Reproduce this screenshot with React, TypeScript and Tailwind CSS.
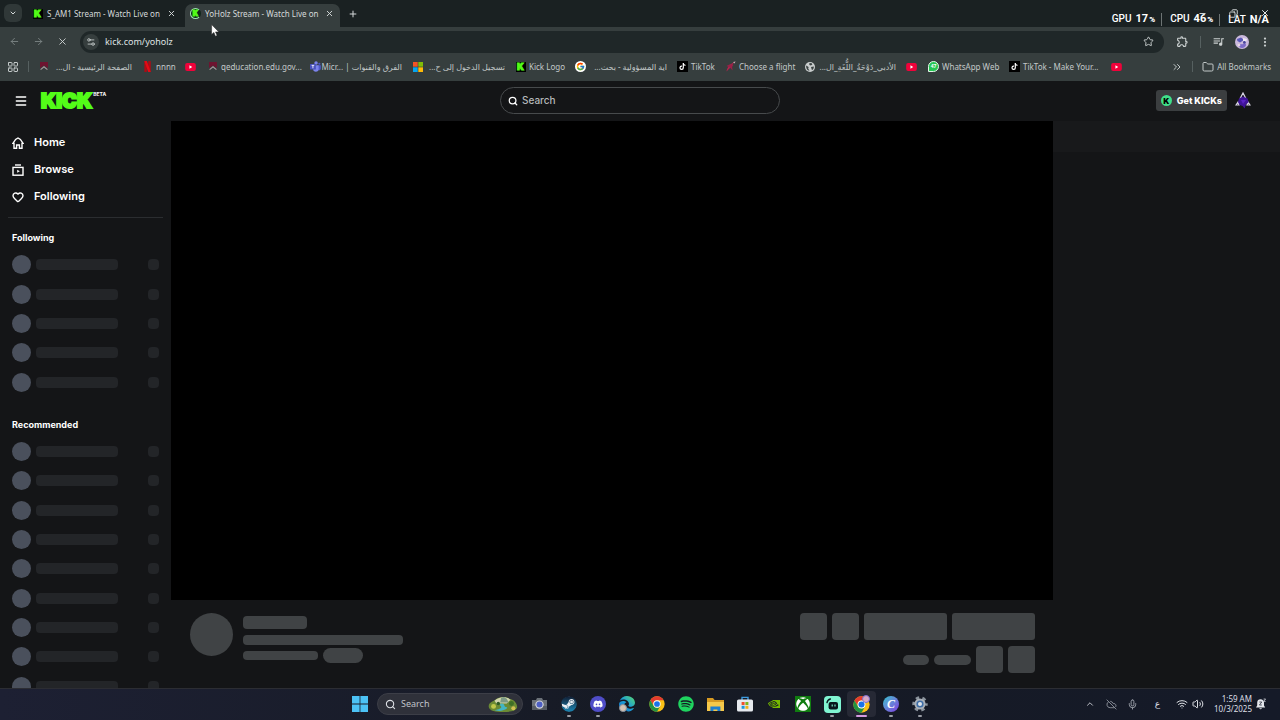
import React from "react";
import {
  ArrowLeft,
  ArrowRight,
  ChevronDown,
  ChevronUp,
  ChevronsRight,
  CloudOff,
  Copy,
  EllipsisVertical,
  Folder,
  Heart,
  LayoutGrid,
  Menu,
  Mic,
  Minus,
  Plus,
  Search,
  Settings2,
  Star,
  Volume2,
  Wifi,
  X,
} from "lucide-react";
import { FaDiscord, FaSpotify, FaSteam, FaXbox, FaTiktok, FaEdge } from "react-icons/fa6";
import { FcGoogle } from "react-icons/fc";
import { MdOutlineExtension, MdOutlineQueueMusic } from "react-icons/md";
import { SiNvidia } from "react-icons/si";

const uiFont = "font-['Noto_Sans','DejaVu_Sans',sans-serif]";

/* ---------- small brand marks ---------- */

const KickIcon = () => (
  <span className="flex size-[10px] items-center justify-center bg-black font-['Inter'] text-[9px] leading-none font-black text-[#53fc18] [-webkit-text-stroke:1px_#53fc18]">
    K
  </span>
);

const KickLiveIcon = () => (
  <span className="flex size-[11px] items-center justify-center rounded-full border border-[#9fe6b4] border-r-transparent bg-[#10251a] font-['Inter'] text-[7px] leading-none font-black text-[#53fc18] [-webkit-text-stroke:1px_#53fc18]">
    K
  </span>
);

const CrestIcon = () => (
  <svg viewBox="0 0 10 10" className="size-[10px]">
    <path d="M1 0h8v6L5 3.6 1 6z" fill="#6d1430" />
    <path d="M1.6 7.6 5 4.8l3.4 2.8" stroke="#a9979d" strokeWidth="1.1" fill="none" />
  </svg>
);

const NetflixIcon = () => (
  <svg viewBox="0 0 10 12" className="h-[11px] w-[9px]">
    <path d="M1.5 0h2.8v12H1.5z" fill="#b00a14" />
    <path d="M5.8 0h2.8v12H5.8z" fill="#b00a14" />
    <path d="M1.5 0h2.8l4.3 12H5.8z" fill="#e50914" />
  </svg>
);

const YoutubeIcon = () => (
  <svg viewBox="0 0 12 9" className="h-[8px] w-[11px]">
    <rect width="12" height="9" rx="2.2" fill="#f0023a" />
    <path d="M4.8 2.6 8 4.5 4.8 6.4z" fill="#fff" />
  </svg>
);

const TeamsIcon = () => (
  <svg viewBox="0 0 12 12" className="size-[11px]">
    <circle cx="6.6" cy="2.2" r="1.9" fill="#7b83eb" />
    <circle cx="10.2" cy="3" r="1.2" fill="#5059c9" />
    <path d="M8 4.6h3.8v3.6a2 2 0 0 1-3.2 1.6z" fill="#5059c9" />
    <path d="M3.4 4.6h6v4a3 3 0 0 1-6 0z" fill="#7b83eb" />
    <rect y="3.2" width="6.4" height="6.2" rx=".6" fill="#4b53bc" />
    <path d="M1.8 4.8h2.8M3.2 4.8v3.2" stroke="#fff" strokeWidth=".9" />
  </svg>
);

const MicrosoftIcon = () => (
  <svg viewBox="0 0 10 10" className="size-[10px]">
    <rect width="4.7" height="4.7" fill="#f35325" />
    <rect x="5.3" width="4.7" height="4.7" fill="#81bc06" />
    <rect y="5.3" width="4.7" height="4.7" fill="#05a6f0" />
    <rect x="5.3" y="5.3" width="4.7" height="4.7" fill="#ffba08" />
  </svg>
);

const GoogleIcon = () => (
  <span className="flex size-[11px] items-center justify-center rounded-full bg-white">
    <FcGoogle size={9} />
  </span>
);

const TiktokIcon = () => (
  <span className="flex size-[11px] items-center justify-center bg-black">
    <FaTiktok size={7} color="#fff" />
  </span>
);

const FlightIcon = () => (
  <svg viewBox="0 0 11 11" className="size-[11px]">
    <path d="M1.5 10.5C2 7 4 3.8 9.6.8 8 3 7 5 5.4 6.4z" fill="#b3234d" />
    <path d="M6 2.8 8.6 5 7 5.6l.6 4L5 6.4 1.4 5z" fill="#9a2048" />
    <path d="m8.2 1 2.4-.6-1.4 2z" fill="#d8bcc4" />
  </svg>
);

const GlobeIcon = () => (
  <svg viewBox="0 0 10 10" className="size-[10px]">
    <circle cx="5" cy="5" r="5" fill="#c9cdcd" />
    <path d="M1.2 3.4 3.6 5l-.4 1.8 1.4 1.6C2.4 8.6.8 6.4 1.2 3.4zM4.2 1.2 6.4 1l1 1.4-1.6 1L4.4 3zM6 5l2.8-.4c.2 1.6-.6 3-1.8 3.6L6.4 6.6z" fill="#3a4242" />
  </svg>
);

const WhatsappIcon = () => (
  <span className="flex size-[11px] items-center justify-center rounded-full rounded-bl-[2px] border border-[#e4f5e9] bg-[#25c653] text-[5px] leading-none font-bold text-white">
    47
  </span>
);

const ChromeIcon = ({ className = "size-[16px]" }: { className?: string }) => (
  <svg viewBox="0 0 48 48" className={className}>
    <circle cx="24" cy="24" r="23" fill="#fbc116" />
    <path d="M4.1 12.5A23 23 0 0 1 43.9 12.5H24A11.5 11.5 0 0 0 14 29.7z" fill="#e33b2e" />
    <path d="M4.1 12.5 14 29.7A11.5 11.5 0 0 0 24 35.5L22 47A23 23 0 0 1 4.1 12.5z" fill="#229342" />
    <path d="M14 29.7A11.5 11.5 0 0 0 34 29.7L24 47A23 23 0 0 1 18 46z" fill="#229342" />
    <circle cx="24" cy="24" r="11" fill="#fff" />
    <circle cx="24" cy="24" r="8.6" fill="#1a73e8" />
  </svg>
);

/* ---------- browser chrome ---------- */

interface ITab {
  title: string;
  active?: boolean;
  icon: React.ReactNode;
}

const tabs: ITab[] = [
  { title: "S_AM1 Stream - Watch Live on", icon: <KickIcon /> },
  { title: "YoHolz Stream - Watch Live on", icon: <KickLiveIcon />, active: true },
];

function TabStrip() {
  return (
    <div className="flex h-[27px] shrink-0 items-end bg-[#1a2122] text-[#d5dada]">
      <button aria-label="Search tabs" className="mb-[5px] ml-1 flex size-[18px] items-center justify-center rounded-[6px] bg-[#303838]">
        <ChevronDown size={8} strokeWidth={3} />
      </button>
      <div className="ml-[5px] flex">
        {tabs.map((tab) => (
          <div
            key={tab.title}
            className={
              "flex h-[23px] w-[155px] items-center rounded-t-[7px] pb-1 pl-[5px] " +
              (tab.active ? "ml-[3px] bg-[#363e3e]" : "")
            }
          >
            <span className="flex w-[11px] shrink-0 justify-center">{tab.icon}</span>
            <span className="mr-auto ml-[4px] text-[8px] leading-3 whitespace-nowrap">{tab.title}</span>
            <button aria-label={"Close " + tab.title} className="mr-[6px] shrink-0">
              <X size={9} strokeWidth={2.5} />
            </button>
          </div>
        ))}
      </div>
      <button aria-label="New tab" className="mb-2 ml-2">
        <Plus size={10} strokeWidth={2.4} />
      </button>
      <div className="mb-[9px] ml-auto flex items-center gap-[22px] pr-[10px] text-[#dfe4e4]">
        <Minus size={9} strokeWidth={2.4} />
        <Copy size={9} strokeWidth={2.4} className="-scale-x-100" />
        <X size={10} strokeWidth={2.4} />
      </div>
    </div>
  );
}

function Toolbar() {
  return (
    <div className="flex h-[29px] shrink-0 items-center rounded-t-[6px] text-[#cdd2d2]">
      <div className="flex pl-[2px]">
        <button aria-label="Back" className="flex w-6 justify-center text-[#7b8383]">
          <ArrowLeft size={11} />
        </button>
        <button aria-label="Forward" className="flex w-6 justify-center text-[#7b8383]">
          <ArrowRight size={11} />
        </button>
        <button aria-label="Stop loading" className="flex w-6 justify-center">
          <X size={11} />
        </button>
      </div>
      <div className="ml-[6px] flex h-[22px] grow items-center rounded-full bg-[#1f2728] pr-[10px] pl-[3px]">
        <button aria-label="View site information" className="flex size-4 items-center justify-center rounded-full bg-[#363e3e]">
          <Settings2 size={10} />
        </button>
        <input
          aria-label="Address"
          defaultValue="kick.com/yoholz"
          className="ml-[6px] h-4 grow bg-transparent text-[9px] text-[#dfe3e3] outline-none"
        />
        <button aria-label="Bookmark this tab">
          <Star size={11} />
        </button>
      </div>
      <button aria-label="Extensions" className="flex h-3 w-[37px] items-center justify-center border-r border-[#566060]">
        <MdOutlineExtension size={13} />
      </button>
      <button aria-label="Media" className="flex w-[34px] justify-center">
        <MdOutlineQueueMusic size={13} />
      </button>
      <button aria-label="Profile">
        <svg viewBox="0 0 14 14" className="size-[14px]">
          <circle cx="7" cy="7" r="7" fill="#cbb9dc" />
          <path d="M2 4 6 2.4 9 5 5 7.4 2.4 6z" fill="#5a58b8" />
          <path d="m8 3 4 1-1 3-3-1z" fill="#efe9f4" />
          <path d="M3 9c2-1 3 1 5 0s3 0 3 1-2 3-4 3-4-2-4-4z" fill="#7d6cc9" />
          <circle cx="4" cy="10" r="1.4" fill="#e7d6e4" />
          <circle cx="9.4" cy="7.4" r="1.4" fill="#49459c" />
        </svg>
      </button>
      <button aria-label="Menu" className="flex w-[31px] justify-center">
        <EllipsisVertical size={12} strokeWidth={2.5} />
      </button>
    </div>
  );
}

interface IBookmark {
  label?: string;
  rtl?: boolean;
  width: string;
  icon: React.ReactNode;
}

const bookmarks: IBookmark[] = [
  { label: "الصفحة الرئيسية - ال...", rtl: true, width: "w-[104px]", icon: <CrestIcon /> },
  { label: "nnnn", width: "w-[43px]", icon: <NetflixIcon /> },
  { width: "w-[22px]", icon: <YoutubeIcon /> },
  { label: "qeducation.edu.gov...", width: "w-[103px]", icon: <CrestIcon /> },
  { label: "الفرق والقنوات | Micr...\u200e", rtl: true, width: "w-[102px]", icon: <TeamsIcon /> },
  { label: "تسجيل الدخول إلى ح...", rtl: true, width: "w-[103px]", icon: <MicrosoftIcon /> },
  { label: "Kick Logo", width: "w-[60px]", icon: <KickIcon /> },
  { label: "اية المسؤولية - بحث...", rtl: true, width: "w-[102px]", icon: <GoogleIcon /> },
  { label: "TikTok", width: "w-[48px]", icon: <TiktokIcon /> },
  { label: "Choose a flight", width: "w-[79px]", icon: <FlightIcon /> },
  { label: "الأدبي_دَوْحَةُ_اللُّغَةِ_ال...", rtl: true, width: "w-[102px]", icon: <GlobeIcon /> },
  { width: "w-[22px]", icon: <YoutubeIcon /> },
  { label: "WhatsApp Web", width: "w-[81px]", icon: <WhatsappIcon /> },
  { label: "TikTok - Make Your...", width: "w-[102px]", icon: <TiktokIcon /> },
  { width: "w-[22px]", icon: <YoutubeIcon /> },
];

function BookmarksBar() {
  return (
    <nav aria-label="Bookmarks" className="flex h-[25px] shrink-0 items-center pb-1 text-[8px] leading-3 whitespace-nowrap text-[#c3c9c9]">
      <button aria-label="Apps" className="ml-[7px]">
        <LayoutGrid size={12} />
      </button>
      <span className="mx-[9px] h-[11px] w-px bg-[#566060]" />
      {bookmarks.map((b, i) => (
        <a key={i} href="#" aria-label={b.label ?? "YouTube"} className={"flex shrink-0 items-center " + b.width}>
          <span className="flex w-[11px] shrink-0 justify-center">{b.icon}</span>
          {b.label && (
            <span dir={b.rtl ? "rtl" : "ltr"} className={b.rtl ? "mr-[10px] grow" : "ml-[3px]"}>
              {b.label}
            </span>
          )}
        </a>
      ))}
      <button aria-label="More bookmarks" className="ml-auto">
        <ChevronsRight size={12} />
      </button>
      <span className="mx-[9px] h-[11px] w-px bg-[#566060]" />
      <button className="mr-[9px] flex items-center gap-[3px]">
        <Folder size={12} />
        All Bookmarks
      </button>
    </nav>
  );
}

const stats = [
  { name: "GPU", value: "17", unit: "%" },
  { name: "CPU", value: "46", unit: "%" },
  { name: "LAT", value: "N/A", unit: "" },
];

// Performance overlay that floats above the window buttons
function StatsOverlay() {
  return (
    <div className="absolute top-[13px] right-[11px] flex items-center font-['Roboto',sans-serif] text-[11px] leading-3 text-white">
      {stats.map((s, i) => (
        <div key={s.name} className={"flex items-baseline " + (i > 0 ? "ml-[6px] border-l border-[#6d7474] pl-[8px]" : "")}>
          <span className="mr-1 text-[10px] font-medium">{s.name}</span>
          <span className="font-bold">{s.value}</span>
          {s.unit && <span className="ml-px text-[8px] font-black">{s.unit}</span>}
        </div>
      ))}
    </div>
  );
}

/* ---------- kick page ---------- */

function KickHeader() {
  return (
    <header className="grid h-10 shrink-0 grid-cols-[1fr_280px_1fr] items-center bg-[#141517] pb-px text-white">
      <div className="flex items-center">
        <button aria-label="Toggle sidebar" className="ml-[14px]">
          <Menu size={14} strokeWidth={2.5} />
        </button>
        <a href="#" aria-label="Kick" className="ml-[13px] flex items-start">
          <span className="text-[20px] leading-5 font-black text-[#53fc18] [-webkit-text-stroke:2px_#53fc18]">KICK</span>
          <span className="ml-px text-[5px] leading-[6px] font-bold">BETA</span>
        </a>
      </div>
      <label className="flex h-[27px] items-center rounded-full border border-[#474a4c] pl-[7px]">
        <Search size={10} strokeWidth={3} />
        <input
          type="text"
          aria-label="Search"
          placeholder="Search"
          className="ml-1 grow bg-transparent text-[10px] font-medium outline-none placeholder:text-[#b4b8ba]"
        />
      </label>
      <div className="flex items-center justify-end pr-[29px]">
        <button className="flex h-[21px] items-center rounded-[3px] bg-[#3b3e40] px-[5px] text-[9px] font-extrabold">
          <span className="mr-[5px] flex size-[11px] items-center justify-center rounded-full bg-[#3fe08a] text-[8px] leading-none font-black text-black">K</span>
          Get KICKs
        </button>
        <button aria-label="Account" className="ml-2">
          <svg viewBox="0 0 16 17" className="h-[17px] w-4">
            <path d="M8 1 5.4 6h5.2zM3 10l-2 3h3zM13 10l2 3h-3z" fill="none" stroke="#d9d4e6" strokeWidth="1.2" />
            <path d="M4 6.4 8 4.6l4.6 2 1 3.6-2.6 2.2-1.4 4-2-2.4-3-1-1.6-3z" fill="#3f1399" />
            <path d="M6 8h5l-3 4z" fill="#5a22c4" />
          </svg>
        </button>
      </div>
    </header>
  );
}

const HomeIcon = () => (
  <svg viewBox="0 0 12 12" className="size-3" fill="none" stroke="currentColor" strokeWidth="1.4">
    <path d="M2 11.2V6.4H.9L3.6 2.4 6 1l2.4 1.4 2.7 4H10v4.8H7.4V8H4.6v3.2z" />
  </svg>
);

const BrowseIcon = () => (
  <svg viewBox="0 0 12 12" className="size-3" fill="none" stroke="currentColor" strokeWidth="1.4">
    <path d="M3 1h6" />
    <rect x="1" y="3.4" width="10" height="7.8" />
    <path d="M5.2 5.8v3L7.8 7.3z" fill="currentColor" stroke="none" />
  </svg>
);

const links = [
  { label: "Home", icon: <HomeIcon /> },
  { label: "Browse", icon: <BrowseIcon /> },
  { label: "Following", icon: <Heart size={12} strokeWidth={2.8} /> },
];

function SkeletonChannel() {
  return (
    <li className="flex items-center">
      <span className="size-[19px] rounded-full bg-[#4a505c]" />
      <span className="ml-[5px] h-[11px] w-[82px] rounded-[4px] bg-[#232528]" />
      <span className="ml-auto size-[11px] rounded-[4px] bg-[#232528]" />
    </li>
  );
}

function Sidebar() {
  return (
    <aside className="w-[171px] shrink-0 overflow-hidden bg-[#141517] pt-2 text-white">
      <nav>
        {links.map((l) => (
          <a key={l.label} href="#" className="flex h-[27px] items-center gap-[10px] pl-3 text-[11px] font-semibold">
            {l.icon}
            {l.label}
          </a>
        ))}
      </nav>
      <hr className="mx-2 mt-[7px] border-[#2b2d30]" />
      <div className="px-3">
        <h2 className="mt-3 text-[9px] leading-4 font-bold">Following</h2>
        <ul className="mt-1 grid h-[147px] grid-rows-5">
          {Array.from({ length: 5 }, (_, i) => (
            <SkeletonChannel key={i} />
          ))}
        </ul>
        <h2 className="mt-5 text-[9px] leading-4 font-bold">Recommended</h2>
        <ul className="mt-1 grid h-[264px] grid-rows-9">
          {Array.from({ length: 9 }, (_, i) => (
            <SkeletonChannel key={i} />
          ))}
        </ul>
      </div>
    </aside>
  );
}

function StreamInfo() {
  return (
    <section aria-label="Stream details" className="flex h-[88px] shrink-0 justify-between pt-[13px] pr-[18px] pl-[19px]">
      <div className="flex">
        <span className="size-[43px] rounded-full bg-[#404345]" />
        <div className="ml-[10px] flex flex-col pt-[3px]">
          <span className="h-[13px] w-16 rounded-[4px] bg-[#404345]" />
          <span className="mt-[6px] h-[10px] w-40 rounded-[4px] bg-[#404345]" />
          <div className="mt-[3px] flex items-center gap-[5px]">
            <span className="h-[9px] w-[75px] rounded-[4px] bg-[#404345]" />
            <span className="h-[15px] w-10 rounded-full bg-[#404345]" />
          </div>
        </div>
      </div>
      <div className="flex flex-col items-end gap-[6px]">
        <div className="flex gap-[5px]">
          <span className="size-[27px] rounded-[4px] bg-[#404345]" />
          <span className="size-[27px] rounded-[4px] bg-[#404345]" />
          <span className="h-[27px] w-[83px] rounded-[3px] bg-[#404345]" />
          <span className="h-[27px] w-[83px] rounded-[3px] bg-[#404345]" />
        </div>
        <div className="flex items-center gap-[5px]">
          <span className="h-[10px] w-[26px] rounded-full bg-[#404345]" />
          <span className="h-[10px] w-[37px] rounded-full bg-[#404345]" />
          <span className="size-[27px] rounded-[4px] bg-[#404345]" />
          <span className="size-[27px] rounded-[4px] bg-[#404345]" />
        </div>
      </div>
    </section>
  );
}

/* ---------- taskbar ---------- */

const CameraIcon = () => (
  <svg viewBox="0 0 17 14" className="h-[14px] w-[17px]">
    <path d="M1 3h4l1-2h5l1 2h4v10H1z" fill="#6b7178" />
    <path d="M1 9h15v4H1z" fill="#565c63" />
    <circle cx="8.5" cy="7.6" r="4.2" fill="#d2d6dc" />
    <circle cx="8.5" cy="7.6" r="3" fill="#4d5fc4" />
  </svg>
);

// white disc underneath shows through the cut-out lever
const SteamIcon = () => (
  <svg viewBox="0 0 16 16" className="size-4">
    <defs>
      <linearGradient id="steam" x1="0" y1="0" x2="0" y2="1">
        <stop offset="0" stopColor="#111d33" />
        <stop offset="1" stopColor="#1b86b4" />
      </linearGradient>
    </defs>
    <circle cx="8" cy="8" r="7.2" fill="#e8edf2" />
    <FaSteam size={16} fill="url(#steam)" />
  </svg>
);

const DiscordIcon = () => (
  <span className="flex size-4 items-center justify-center rounded-full bg-[#4f4dc8] text-white">
    <FaDiscord size={10} />
  </span>
);

const EdgeIcon = () => (
  <span className="relative">
    <svg viewBox="0 0 16 16" className="size-4">
      <defs>
        <linearGradient id="edge" x1="0" y1="1" x2="1" y2="0">
          <stop offset="0" stopColor="#1266c0" />
          <stop offset=".5" stopColor="#1c9fd6" />
          <stop offset="1" stopColor="#5ddc6a" />
        </linearGradient>
      </defs>
      <FaEdge size={16} fill="url(#edge)" />
    </svg>
    <span className="absolute bottom-0 left-0 size-[8px] rounded-full border border-[#8b8f96] bg-[#d5c3b5]" />
  </span>
);

const ExplorerIcon = () => (
  <svg viewBox="0 0 17 15" className="h-[15px] w-[17px]">
    <path d="M0 1h6l1.6 2H17v11H0z" fill="#d79a22" />
    <path d="M0 5h17v9H0z" fill="#f6c84a" />
    <path d="M3.4 14V9.6h10V14h-3v-1.6h-4V14z" fill="#1f7fd0" />
  </svg>
);

const StoreIcon = () => (
  <svg viewBox="0 0 16 16" className="size-4">
    <path d="M5 4V1.4h6V4" fill="none" stroke="#3c9be0" strokeWidth="1.4" />
    <rect y="3.4" width="16" height="12.2" rx="1.6" fill="#e6eaef" />
    <path d="M4.6 6h3v3h-3z" fill="#f0502c" />
    <path d="M8.4 6h3v3h-3z" fill="#7cb51d" />
    <path d="M4.6 9.8h3v3h-3z" fill="#1c97dc" />
    <path d="M8.4 9.8h3v3h-3z" fill="#f0b31c" />
  </svg>
);

const XboxIcon = () => (
  <span className="flex size-4 items-center justify-center bg-[#107c10] text-white">
    <FaXbox size={14} />
  </span>
);

const StreamlabsIcon = () => (
  <svg viewBox="0 0 17 17" className="size-[17px]">
    <rect width="17" height="17" rx="4" fill="#80f5d2" />
    <path d="M3 6.6A4.6 4.6 0 0 1 6.4 3" fill="none" stroke="#09161d" strokeWidth="1.4" strokeLinecap="round" />
    <rect x="4.6" y="6" width="9.4" height="7.4" rx="2" fill="#09161d" />
    <path d="M8.2 8.6v2M11 8.6v2" stroke="#80f5d2" strokeWidth="1.1" />
  </svg>
);

const ChromeProfileIcon = () => (
  <span className="relative">
    <ChromeIcon className="size-[17px]" />
    <span className="absolute -top-px right-0 size-[8px] rounded-full border border-[#7c6fd0] bg-[#d8a9c6]" />
  </span>
);

const CanvaIcon = () => (
  <span className="flex size-4 items-center justify-center rounded-full bg-gradient-to-br from-[#12c2cc] to-[#7a2be0] font-['Liberation_Serif',serif] text-[12px] leading-none font-bold text-white italic">
    C
  </span>
);

const GearIcon = () => (
  <svg viewBox="0 0 16 16" className="size-4">
    <circle cx="8" cy="8" r="6.2" fill="none" stroke="#8b939c" strokeWidth="3" strokeDasharray="3.3 3.19" strokeDashoffset="1.6" />
    <circle cx="8" cy="8" r="4.6" fill="#3e6ea8" stroke="#a9b0b8" strokeWidth="2" />
    <circle cx="8" cy="8" r="2" fill="#dfe4ea" />
  </svg>
);

const apps = [
  { name: "Camera", icon: <CameraIcon /> },
  { name: "Steam", icon: <SteamIcon />, running: true },
  { name: "Discord", icon: <DiscordIcon />, running: true },
  { name: "Edge", icon: <EdgeIcon /> },
  { name: "Chrome", icon: <ChromeIcon /> },
  { name: "Spotify", icon: <FaSpotify size={16} color="#1fd35f" /> },
  { name: "File Explorer", icon: <ExplorerIcon /> },
  { name: "Microsoft Store", icon: <StoreIcon /> },
  { name: "Nvidia", icon: <SiNvidia size={12} color="#76b900" /> },
  { name: "Xbox", icon: <XboxIcon /> },
  { name: "Streamlabs", icon: <StreamlabsIcon />, running: true },
  { name: "Chrome profile", icon: <ChromeProfileIcon />, active: true },
  { name: "Canva", icon: <CanvaIcon />, running: true },
  { name: "Settings", icon: <GearIcon />, running: true },
];

function Taskbar() {
  return (
    <footer className="grid h-8 shrink-0 grid-cols-[1fr_auto_1fr] items-center border-t border-[#2c2d33] bg-gradient-to-r from-[#1d2033] via-[#161a24] to-[#151a28] pb-px text-[#dcdfe4]">
      <span />
      <div className="flex items-center gap-[2px]">
        <button aria-label="Start" className="flex w-[30px] justify-center">
          <svg viewBox="0 0 16 16" className="size-4">
            <path d="M0 0h7.6v7.6H0zM8.4 0H16v7.6H8.4zM0 8.4h7.6V16H0zM8.4 8.4H16V16H8.4z" fill="#4cc2f5" />
          </svg>
        </button>
        <label className="flex h-[22px] w-[146px] items-center overflow-hidden rounded-full border border-[#3c3e47] bg-[#2f313a] pr-[3px] pl-[7px]">
          <Search size={11} strokeWidth={2.4} className="shrink-0" />
          <input
            type="text"
            aria-label="Search Windows"
            placeholder="Search"
            className="ml-[5px] w-[80px] bg-transparent text-[9px] outline-none placeholder:text-[#c0c3c9]"
          />
          <svg viewBox="0 0 32 18" className="ml-auto h-[17px] w-8 shrink-0">
            <path d="M1 12C0 7 5 6 8 4c3-3 11-4 15-1 5 1 8 5 8 9-1 4-7 5-15 5S2 16 1 12z" fill="#6b8a34" />
            <path d="M7 5c4-4 12-5 17-1l-4 4H9z" fill="#d0d4ac" />
            <path d="m14 2 3-1 3 2 2 4h-9z" fill="#7d9a86" />
            <path d="M15 8c4 1 1 3 5 4 2 1-2 3-8 4l-5-1c4-1 8-2 7-4-1-1-3-2 1-3z" fill="#43b5c4" />
            <circle cx="6" cy="11" r="2.6" fill="#c0c94a" />
            <circle cx="25" cy="8" r="2.6" fill="#3f6f26" />
            <circle cx="27" cy="13" r="2.2" fill="#d3c052" />
            <circle cx="11" cy="8" r="1.8" fill="#2e5a24" />
          </svg>
        </label>
        <div className="grid w-[410px] grid-cols-14">
          {apps.map((app) => (
            <button
              key={app.name}
              aria-label={app.name}
              className={"relative flex h-[26px] items-center justify-center rounded " + (app.active ? "bg-[#262935]" : "")}
            >
              {app.icon}
              {app.running && <span className="absolute bottom-0 h-[2px] w-1 rounded-full bg-[#9a9ea6]" />}
              {app.active && <span className="absolute bottom-0 h-[2px] w-[11px] rounded-full bg-[#d49be0]" />}
            </button>
          ))}
        </div>
      </div>
      <div className="flex items-center justify-end pr-[13px] text-[8px] leading-[10px]">
        <button aria-label="Show hidden icons">
          <ChevronUp size={10} />
        </button>
        <CloudOff size={11} className="ml-[11px] text-[#8b8f99]" />
        <Mic size={11} className="ml-[10px] text-[#a3a7b0]" />
        <span className="ml-[17px] text-[9px]">ع</span>
        <Wifi size={12} className="ml-[16px]" />
        <Volume2 size={12} className="ml-1" />
        <div className="ml-[10px] text-right">
          <div>1:59 AM</div>
          <div>10/3/2025</div>
        </div>
        <button aria-label="Notifications" className="ml-[3px]">
          <svg viewBox="0 0 12 12" className="size-3">
            <path d="M1 9.4 2.2 7.6V4.4a3.4 3.4 0 0 1 3.4-3.2c2 0 3.4 1.4 3.4 3.2v3.2l1.2 1.8z" fill="#e4e7ec" />
            <path d="M4.2 10.2a1.5 1.5 0 0 0 2.8 0z" fill="#e4e7ec" />
            <path d="M4.4 4h2.4L4.4 7h2.4" fill="none" stroke="#2a2f3c" strokeWidth=".8" />
            <path d="M8.6 1h2L8.6 3.4h2" fill="none" stroke="#e4e7ec" strokeWidth=".7" />
          </svg>
        </button>
      </div>
    </footer>
  );
}

const App = () => {
  return (
    <div className={"relative flex h-screen w-full flex-col overflow-hidden bg-[#141517] " + uiFont}>
      <TabStrip />
      <div className="shrink-0 bg-[#363e3e]">
        <Toolbar />
        <BookmarksBar />
      </div>

      <div className="flex min-h-0 grow flex-col font-['Inter',sans-serif]">
        <KickHeader />
        <div className="flex min-h-0 grow">
          <Sidebar />
          <main className="flex min-w-0 grow flex-col">
            <div className="grow bg-black" />
            <StreamInfo />
          </main>
          <aside aria-label="Chat" className="w-[227px] shrink-0 bg-[#141517]">
            <div className="h-[31px] bg-[#18191b]" />
          </aside>
        </div>
      </div>

      <Taskbar />
      <StatsOverlay />

      {/* mouse pointer */}
      <svg viewBox="0 0 9 13" className="absolute top-6 left-[211px] h-[13px] w-[9px]">
        <path d="M.6.6v9.8l2.3-2 1.5 3.8 1.7-.7-1.6-3.6h3.3z" fill="#fff" stroke="#222" strokeWidth=".5" />
      </svg>
    </div>
  );
};

export default App;
